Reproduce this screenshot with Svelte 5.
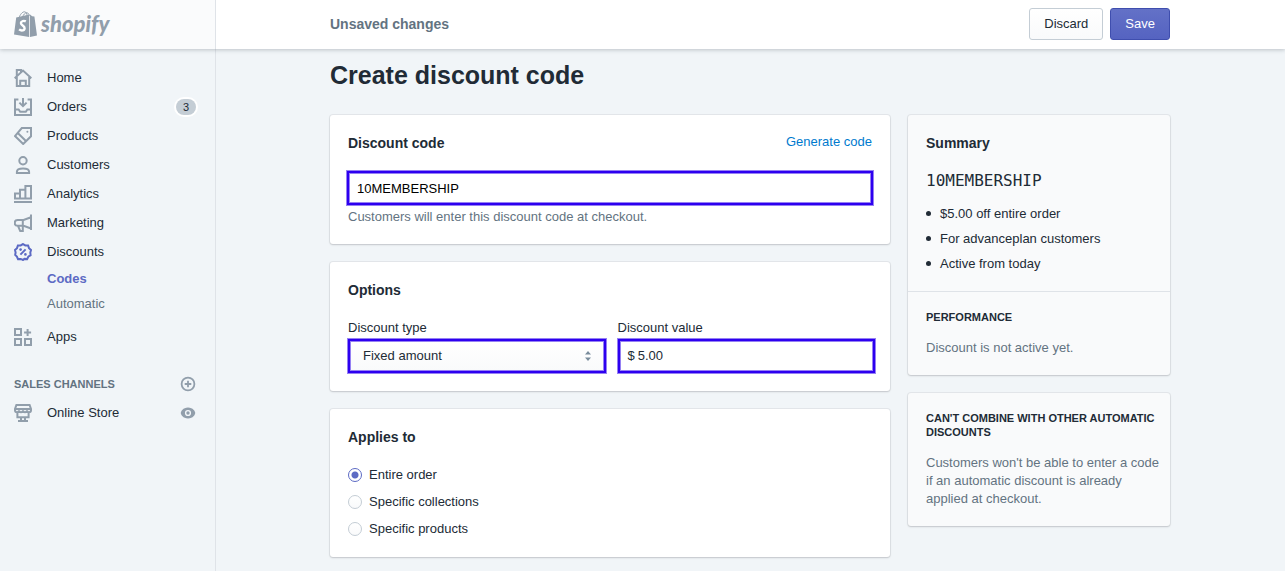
<script lang="ts">
	interface NavItem {
		icon: string;
		label: string;
		badge?: number;
		active?: boolean;
	}

	const navItems: NavItem[] = [
		{ icon: 'home', label: 'Home' },
		{ icon: 'orders', label: 'Orders', badge: 3 },
		{ icon: 'products', label: 'Products' },
		{ icon: 'customers', label: 'Customers' },
		{ icon: 'analytics', label: 'Analytics' },
		{ icon: 'marketing', label: 'Marketing' },
		{ icon: 'discounts', label: 'Discounts', active: true }
	];

	const targets = [
		{ value: 'order', label: 'Entire order' },
		{ value: 'collections', label: 'Specific collections' },
		{ value: 'products', label: 'Specific products' }
	];

	let code = $state('10MEMBERSHIP');
	let discountType = $state('fixed');
	let amount = $state('5.00');
	let appliesTo = $state('order');

	let targetLabel = $derived(
		(targets.find((t) => t.value === appliesTo)?.label ?? '').toLowerCase()
	);
	let amountLabel = $derived(discountType === 'fixed' ? `$${amount}` : `${amount}%`);

	function generateCode() {
		code = Math.random().toString(36).slice(2, 14).toUpperCase();
	}

	function discard() {
		code = '10MEMBERSHIP';
		discountType = 'fixed';
		amount = '5.00';
		appliesTo = 'order';
	}
</script>

{#snippet icon(name: string)}
	<svg class="icon" viewBox="0 0 18 18" aria-hidden="true">
		{#if name === 'home'}
			<path d="M2.8 7.500V1h4.200v2.200M.6 9.200 9 1.600l8.400 7.600M2.800 8v9h12.400V8M6.200 17v-5.200h5.600V17" />
		{:else if name === 'orders'}
			<path d="M4.400 1.500H1V17h16V1.500h-3.400M9 0v8M5.400 4.600 9 8.200l3.600-3.600M1 11.400h3.600l1.600 2.400h5.600l1.600-2.400H17" />
		{:else if name === 'products'}
			<path d="M7.800 1H17v8.300L9.200 17 1 9zM4 6.200l8.200 8" />
			<circle class="solid" cx="13.4" cy="4.8" r="1" />
		{:else if name === 'customers'}
			<circle cx="9" cy="4.7" r="3.7" />
			<path d="M2.900 17v-1.200c0-2.300 3-3.400 6.100-3.400s6.100 1.100 6.100 3.400V17z" />
		{:else if name === 'analytics'}
			<path d="M1 13.500v-5h5v5zM6 13.500V4.700h5.400v8.800zM11.400 13.500V1H17v12.500zM0 17h18" />
		{:else if name === 'marketing'}
			<path d="M17 .5V16M17 3.200 9.600 6H3.600a2.800 2.800 0 0 0 0 5.800h6l7.400 2.700M8.800 6v11H6.200L4 11.800" />
		{:else if name === 'discounts'}
			<path d="M9 1l2.300 1.400 2.800.1.900 2.600L17 7l-.7 2.500.3 2.700-2.300 1.500-1.200 2.400-2.700-.2L9 17l-2.300-1.100-2.700.2-1.100-2.500L1.200 12l.4-2.500L1 7l2-1.900.9-2.600 2.800-.1zM6.400 11.600l5.200-5.200" />
			<circle class="solid" cx="6.6" cy="6.6" r="1.3" />
			<circle class="solid" cx="11.4" cy="11.4" r="1.3" />
		{:else if name === 'apps'}
			<path d="M1 1h6v6H1zM1 11h6v6H1zM11 11h6v6h-6zM13.600 1v7M10.100 4.500h7" />
		{:else if name === 'store'}
			<path d="M2.400 1h13.200L17 4.900v1.300a2 2 0 0 1-4 0 2 2 0 0 1-4 0 2 2 0 0 1-4 0 2 2 0 0 1-4 0V4.900zM1 4.900h16M3.400 9v4.300h11.200V9M7 13.400v3.400M11 13.400v3.400M4 17h10" />
		{/if}
	</svg>
{/snippet}

<div class="app">
	<header class="topbar">
		<a class="logo" href="#home">
			<svg class="bag" viewBox="0 0 23 26" aria-hidden="true">
				<path class="bag-body" d="M2.200 6.600 15.200 3.400V26L0 23.400zM16 3.400l2.200 1.900 2.200.2L23 24.400 16 26z" />
				<path class="bag-handle" d="M5 7C6 3.500 8.400.8 10.400.8c2 0 2.600 2 2.700 4M8.600 6C9.400 3.600 11 1.800 12.600 1.800c1.600 0 2.600 1.200 2.800 3" />
				<path class="bag-mark" d="M11.800 10.400c-1.600-.9-4.900-.6-4.900 1.700 0 2.400 3.800 2.500 3.700 5.100-.1 2.500-3.200 3-5.500 1.200" />
			</svg>
			<span>shopify</span>
		</a>
		<div class="topbar-main">
			<div class="content topbar-content">
				<span class="status">Unsaved changes</span>
				<button class="btn" type="button" onclick={discard}>Discard</button>
				<button class="btn primary" type="button">Save</button>
			</div>
		</div>
	</header>

	<nav class="sidebar">
		{#each navItems as item}
			<a class="nav-item" class:active={item.active} href="#{item.icon}">
				{@render icon(item.icon)}
				<span class="nav-label">{item.label}</span>
				{#if item.badge}
					<span class="badge">{item.badge}</span>
				{/if}
			</a>
		{/each}
		<div class="subnav">
			<a class="current" href="#codes">Codes</a>
			<a href="#automatic">Automatic</a>
		</div>
		<a class="nav-item" href="#apps">
			{@render icon('apps')}
			<span class="nav-label">Apps</span>
		</a>

		<div class="channels">
			<span>SALES CHANNELS</span>
			<button class="icon-btn" type="button" aria-label="Add sales channel">
				<svg viewBox="0 0 16 16" aria-hidden="true">
					<circle cx="8" cy="8" r="6.4" />
					<path d="M8 4.700v6.600M4.700 8h6.600" />
				</svg>
			</button>
		</div>
		<div class="nav-item">
			<a class="channel-link" href="#store">
				{@render icon('store')}
				<span class="nav-label">Online Store</span>
			</a>
			<button class="icon-btn" type="button" aria-label="View online store">
				<svg viewBox="0 0 16 16" aria-hidden="true">
					<path class="eye" d="M8 2.500c5 0 7.200 4 7.200 5.500S13 13.500 8 13.500.8 9.500.8 8 3 2.500 8 2.500z" />
					<circle class="eye-ring" cx="8" cy="8" r="2.4" />
				</svg>
			</button>
		</div>
	</nav>

	<main>
		<div class="content">
			<h1>Create discount code</h1>
			<div class="columns">
				<div class="stack">
					<section class="card">
						<div class="card-header">
							<h2><label for="code">Discount code</label></h2>
							<button class="link" type="button" onclick={generateCode}>Generate code</button>
						</div>
						<div class="code-field">
							<input id="code" class="control" type="text" bind:value={code} />
						</div>
						<p class="help">Customers will enter this discount code at checkout.</p>
					</section>

					<section class="card">
						<h2>Options</h2>
						<div class="fields">
							<div class="field">
								<label for="type">Discount type</label>
								<div class="select">
									<select id="type" class="control" bind:value={discountType}>
										<option value="fixed">Fixed amount</option>
										<option value="percentage">Percentage</option>
									</select>
									<svg viewBox="0 0 6 10" aria-hidden="true">
										<path d="M3 0l3 3.500H0zM3 10l3-3.500H0z" />
									</svg>
								</div>
							</div>
							<div class="field">
								<label for="value">Discount value</label>
								<div class="control money">
									<span>$</span>
									<input id="value" type="text" bind:value={amount} />
								</div>
							</div>
						</div>
					</section>

					<section class="card">
						<h2>Applies to</h2>
						<div class="choices">
							{#each targets as target}
								<label>
									<input type="radio" name="applies" value={target.value} bind:group={appliesTo} />
									{target.label}
								</label>
							{/each}
						</div>
					</section>
				</div>

				<aside class="stack">
					<section class="card subdued">
						<h2>Summary</h2>
						<p class="code">{code}</p>
						<ul>
							<li>{amountLabel} off {targetLabel}</li>
							<li>For advanceplan customers</li>
							<li>Active from today</li>
						</ul>
						<div class="section">
							<h3>PERFORMANCE</h3>
							<p>Discount is not active yet.</p>
						</div>
					</section>

					<section class="card subdued">
						<h3>CAN'T COMBINE WITH OTHER AUTOMATIC DISCOUNTS</h3>
						<p>
							Customers won't be able to enter a code if an automatic discount is already applied at
							checkout.
						</p>
					</section>
				</aside>
			</div>
		</div>
	</main>
</div>

<style>
	:global(body) {
		background: #f1f5f8;
	}

	.app {
		display: grid;
		grid-template-columns: 216px minmax(0, 1fr);
		grid-template-rows: 49px 1fr;
		min-height: 100vh;
		font-family: 'Liberation Sans', Arial, sans-serif;
		font-size: 13px;
		line-height: 18px;
		color: #212b36;
	}

	* {
		box-sizing: border-box;
	}

	h1,
	h2,
	h3,
	p,
	ul {
		margin: 0;
	}

	a {
		color: inherit;
		text-decoration: none;
	}

	button,
	input,
	select {
		font: inherit;
		color: inherit;
	}

	/* Top bar */
	.topbar {
		grid-column: 1 / -1;
		display: grid;
		grid-template-columns: subgrid;
		background: #fff;
		box-shadow: 0 1px 4px rgba(33, 43, 54, 0.25);
		z-index: 1;
	}

	.topbar-main {
		padding: 0 1px 1px 0;
	}

	.logo {
		display: flex;
		align-items: center;
		gap: 4px;
		padding: 0 0 1px 14px;
		background: #fafbfc;
		border-right: 1px solid #dfe3e8;
		font-family: Lato, sans-serif;
		font-size: 22px;
		font-weight: 900;
		font-style: italic;
		color: #919eab;
	}

	.bag {
		width: 23px;
		height: 26px;
	}

	.bag-body {
		fill: #919eab;
	}

	.bag-handle {
		fill: none;
		stroke: #919eab;
	}

	.bag-mark {
		fill: none;
		stroke: #fff;
		stroke-width: 2.4;
	}

	.content {
		max-width: 840px;
		margin: 0 auto;
	}

	.topbar-content {
		display: flex;
		align-items: center;
		gap: 7px;
		height: 100%;
	}

	.status {
		flex: 1;
		font-size: 14px;
		font-weight: 700;
		color: #637381;
	}

	.btn {
		height: 32px;
		padding: 0 14px;
		border: 1px solid #c4cdd5;
		border-radius: 3px;
		background: linear-gradient(#fff, #f9fafb);
		cursor: pointer;
	}

	.btn.primary {
		border-color: #3f4eae;
		background: linear-gradient(#6371c7, #5563c1);
		color: #fff;
	}

	/* Sidebar */
	.sidebar {
		padding: 14px 19px 0 14px;
		border-right: 1px solid #dfe3e8;
	}

	.nav-item {
		display: flex;
		align-items: center;
		height: 29px;
	}

	.channel-link {
		display: flex;
		flex: 1;
		align-items: center;
	}

	.nav-label {
		flex: 1;
		margin-left: 15px;
	}

	.icon {
		width: 18px;
		height: 18px;
		fill: none;
		stroke: #919eab;
		stroke-width: 2;
	}

	.icon .solid {
		fill: #919eab;
		stroke: none;
	}

	.active .icon {
		stroke: #5c6ac4;
	}

	.active .icon .solid {
		fill: #5c6ac4;
	}

	.badge {
		padding: 0 7px;
		border-radius: 8px;
		background: #c4cdd5;
		box-shadow: 0 0 0 2px #fff;
		font-size: 11px;
		line-height: 16px;
	}

	.subnav {
		display: flex;
		flex-direction: column;
		margin: 0 0 6px 33px;
		line-height: 25px;
		color: #637381;
	}

	.current {
		font-weight: 700;
		color: #5c6ac4;
	}

	.channels {
		display: flex;
		align-items: center;
		justify-content: space-between;
		height: 18px;
		margin: 24px 0 5px;
		font-size: 11px;
		font-weight: 700;
		color: #637381;
	}

	.icon-btn {
		width: 16px;
		height: 16px;
		padding: 0;
		border: 0;
		background: none;
		cursor: pointer;
	}

	.icon-btn svg {
		display: block;
		fill: none;
		stroke: #919eab;
		stroke-width: 1.8;
	}

	.icon-btn .eye {
		fill: #919eab;
		stroke: none;
	}

	.icon-btn .eye-ring {
		fill: #919eab;
		stroke: #f1f5f8;
		stroke-width: 1.4;
	}

	/* Page */
	main {
		padding: 12px 1px 14px 0;
	}

	h1 {
		margin-bottom: 26px;
		font-size: 25px;
		line-height: 28px;
	}

	h2 {
		font-size: 14px;
		line-height: 20px;
		margin-bottom: 18px;
	}

	h3 {
		margin-bottom: 15px;
		font-size: 11px;
		line-height: 14px;
	}

	.columns {
		display: grid;
		grid-template-columns: minmax(0, 560fr) minmax(0, 262fr);
		align-items: start;
		gap: 18px;
	}

	.stack {
		display: flex;
		flex-direction: column;
		gap: 18px;
	}

	.card {
		padding: 18px;
		border-radius: 3px;
		background: #fff;
		box-shadow: 0 0 0 1px rgba(63, 63, 68, 0.07), 0 1px 2px rgba(63, 63, 68, 0.2);
	}

	.card.subdued {
		padding-right: 8px;
		background: #f9fafb;
	}

	.card-header {
		display: flex;
		justify-content: space-between;
	}

	.link {
		height: 18px;
		padding: 0;
		border: 0;
		background: none;
		color: #007ace;
		cursor: pointer;
	}

	.control {
		display: block;
		width: 100%;
		height: 34px;
		padding: 0 8px;
		border: 2px solid #2d00f0;
		outline: 0;
		background: #fff;
		box-shadow: 0 0 0 1px #9580f3, inset 0 0 0 1px #9580f3;
	}

	.code-field {
		margin: 0 -1px;
		color: #000;
	}

	.help {
		margin-top: 3px;
	}

	.help,
	.subdued p:not(.code) {
		color: #637381;
	}

	.fields {
		display: grid;
		grid-template-columns: 1fr 1fr;
		gap: 12px;
		margin: 0 -3px 0 0;
	}

	.field label {
		display: block;
		line-height: 20px;
		margin-bottom: 1px;
	}

	.select {
		position: relative;
	}

	.select select {
		padding: 0 13px;
		border-radius: 0;
		background: linear-gradient(#fff, #f9fafb);
		appearance: none;
	}

	.select svg {
		position: absolute;
		top: 12px;
		right: 15px;
		width: 6px;
		height: 10px;
		fill: #798c9c;
		pointer-events: none;
	}

	.money {
		display: flex;
		align-items: center;
		gap: 3px;
	}

	.money input {
		flex: 1;
		min-width: 0;
		padding: 0;
		border: 0;
		outline: 0;
		background: none;
	}

	.choices {
		display: flex;
		flex-direction: column;
		gap: 7px;
		line-height: 20px;
	}

	.choices label {
		display: flex;
		align-items: center;
		gap: 7px;
	}

	.choices input {
		width: 14px;
		height: 14px;
		margin: 0;
		border: 1px solid #c4cdd5;
		border-radius: 50%;
		background: linear-gradient(#fff, #f9fafb);
		appearance: none;
	}

	.choices input:checked {
		border-color: #5c6ac4;
		background: radial-gradient(circle, #5c6ac4 3px, #fff 4px);
	}

	.code {
		font-family: 'DejaVu Sans Mono', monospace;
		font-size: 16px;
		line-height: 20px;
		margin-bottom: 10px;
	}

	ul {
		padding: 0;
		line-height: 25px;
		list-style: none;
	}

	li {
		display: flex;
		align-items: center;
		gap: 9px;
	}

	li::before {
		content: '';
		width: 5px;
		height: 5px;
		border-radius: 50%;
		background: #212b36;
	}

	.section {
		margin: 15px -8px 0 -18px;
		padding: 18px 8px 0 18px;
		border-top: 1px solid #dfe3e8;
	}
</style>
